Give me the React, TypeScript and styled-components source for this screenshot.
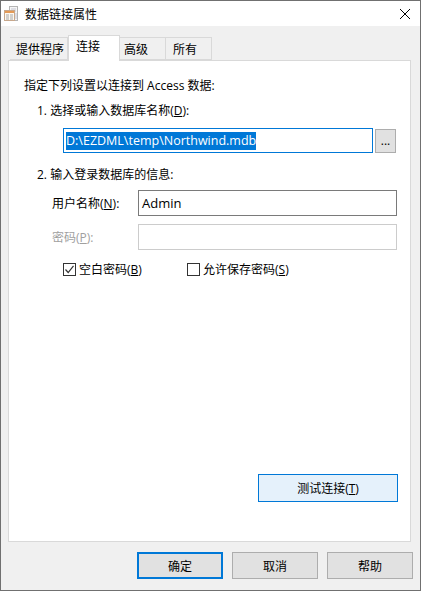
import React from 'react';
import styled, { createGlobalStyle } from 'styled-components';

const GlobalStyle = createGlobalStyle`
    html, body {
        margin: 0;
        padding: 0;
        background: #f0f0f0;
    }
    * {
        box-sizing: border-box;
    }
`;

const Dialog = styled.div`
    width: 421px;
    height: 591px;
    display: flex;
    flex-direction: column;
    border: 1px solid #707070;
    background: #f0f0f0;
    color: #000;
    font-family: "Open Sans", "Noto Sans CJK SC", sans-serif;
    font-size: 12px;
    overflow: hidden;
`;

const TitleBar = styled.div`
    height: 25px;
    flex: none;
    display: flex;
    align-items: center;
    padding-left: 3px;
    background: #fff;
`;

const TitleText = styled.span`
    margin-left: 5px;
    font-size: 12px;
`;

const CloseIcon = styled.svg`
    margin-left: auto;
    margin-right: 10px;
    width: 10px;
    height: 10px;
`;

const Body = styled.div`
    flex: 1;
    display: flex;
    flex-direction: column;
    padding: 9px 9px 0 7px;
`;

const TabRow = styled.div`
    display: flex;
    align-items: flex-end;
    height: 25px;
    padding-left: 2px;
    position: relative;
    z-index: 1;
`;

const Tab = styled.div<{ $active?: boolean; $width: number; $pad: number }>`
    width: ${p => p.$width}px;
    height: ${p => (p.$active ? 26 : 23)}px;
    margin-bottom: ${p => (p.$active ? -1 : 0)}px;
    padding: ${p => (p.$active ? 3 : 4)}px 0 0 ${p => p.$pad}px;
    line-height: 16px;
    background: ${p => (p.$active ? '#fff' : '#f0f0f0')};
    border: 1px solid #d9d9d9;
    border-bottom: ${p => (p.$active ? 'none' : '1px solid #d9d9d9')};
    border-left: ${p => (p.$active ? '1px solid #d9d9d9' : 'none')};
`;

const Panel = styled.div`
    height: 482px;
    display: flex;
    flex-direction: column;
    background: #fff;
    border: 1px solid #d9d9d9;
    padding: 17px 12px 0 15px;
`;

const Line = styled.div<{ $indent?: number; $top?: number; $muted?: boolean }>`
    margin-left: ${p => p.$indent ?? 0}px;
    margin-top: ${p => p.$top ?? 0}px;
    line-height: 16px;
    color: ${p => (p.$muted ? '#a0a0a0' : '#000')};
`;

const PathRow = styled.div`
    display: flex;
    align-items: center;
    gap: 2px;
    margin-left: 39px;
    margin-top: 9px;
`;

const PathInput = styled.div`
    width: 310px;
    height: 25px;
    display: flex;
    align-items: center;
    padding-left: 2px;
    border: 1px solid #0078d7;
    background: #fff;
`;

const Selected = styled.span`
    background: #0078d7;
    color: #fff;
    line-height: 18px;
    font-size: 12.5px;
`;

const BrowseButton = styled.div`
    width: 21px;
    height: 24px;
    display: flex;
    align-items: center;
    justify-content: center;
    background: #e1e1e1;
    border: 1px solid #adadad;
`;

const Field = styled.div`
    display: grid;
    grid-template-columns: 86px 259px;
    align-items: center;
    margin-left: 28px;
    height: 26px;
`;

const FieldLabel = styled.span`
    padding-top: 2px;
`;

const FieldBox = styled.div<{ $disabled?: boolean }>`
    height: 26px;
    display: flex;
    align-items: center;
    padding-left: 3px;
    font-size: 13px;
    background: #fff;
    border: 1px solid ${p => (p.$disabled ? '#cccccc' : '#7a7a7a')};
`;

const CheckRow = styled.div`
    display: flex;
    margin-left: 39px;
    margin-top: 11px;
    height: 16px;
`;

const CheckItem = styled.div<{ $width: number }>`
    width: ${p => p.$width}px;
    display: flex;
    align-items: center;
    gap: 3px;
`;

const CheckBox = styled.div`
    width: 13px;
    height: 13px;
    display: flex;
    border: 1px solid #333;
    background: #fff;
`;

const PushButton = styled.div<{ $width: number; $height: number; $kind?: 'hover' | 'default' }>`
    width: ${p => p.$width}px;
    height: ${p => p.$height}px;
    display: flex;
    align-items: center;
    justify-content: center;
    background: ${p => (p.$kind === 'hover' ? '#e5f1fb' : '#e1e1e1')};
    border: ${p =>
        p.$kind === 'default' ? '2px solid #0078d7'
        : p.$kind === 'hover' ? '1px solid #0078d7'
        : '1px solid #adadad'};
`;

const TestRow = styled.div`
    margin-top: auto;
    margin-bottom: 39px;
    display: flex;
    justify-content: flex-end;
`;

const Footer = styled.div`
    display: flex;
    justify-content: flex-end;
    gap: 9px;
    margin-top: 10px;
    margin-right: -2px;
`;

const AppIcon = () => (
    <svg width="16" height="16" viewBox="0 0 16 16">
        <rect x="5.5" y="0.5" width="8" height="14" fill="#f6f6f6" stroke="#b4b4b4" />
        <path d="M7 3h5M7 5h5M11 8h2M11 10h2M11 12h2" stroke="#c4c4d0" />
        <rect x="0.5" y="4.5" width="10" height="10" fill="#fdf8f0" stroke="#c8a88c" />
        <rect x="1" y="5" width="9" height="2" fill="#e59a55" />
        <path d="M2 9h3M6 9h3M2 11h3M6 11h3M2 13h3M6 13h3" stroke="#a8a8a8" />
    </svg>
);

const Check = () => (
    <svg width="11" height="11" viewBox="0 0 11 11">
        <path d="M1.5 5.5 4.2 8.5 9.5 1.8" fill="none" stroke="#333" strokeWidth="1.2" />
    </svg>
);

const App = () => {
    return (
        <Dialog>
            <GlobalStyle />
            <TitleBar>
                <AppIcon />
                <TitleText>数据链接属性</TitleText>
                <CloseIcon viewBox="0 0 10 10">
                    <path d="M0 0 10 10M10 0 0 10" stroke="#000" strokeWidth="1" />
                </CloseIcon>
            </TitleBar>
            <Body>
                <TabRow>
                    <Tab $width={58} $pad={6}>提供程序</Tab>
                    <Tab $active $width={52} $pad={7}>连接</Tab>
                    <Tab $width={46} $pad={4}>高级</Tab>
                    <Tab $width={46} $pad={7}>所有</Tab>
                </TabRow>
                <Panel>
                    <Line>指定下列设置以连接到 Access 数据:</Line>
                    <Line $indent={13} $top={9}>1. 选择或输入数据库名称(<u>D</u>):</Line>
                    <PathRow>
                        <PathInput>
                            <Selected>D:\EZDML\temp\Northwind.mdb</Selected>
                        </PathInput>
                        <BrowseButton>...</BrowseButton>
                    </PathRow>
                    <Line $indent={13} $top={14}>2. 输入登录数据库的信息:</Line>
                    <Line as="div" $top={7}>
                        <Field>
                            <FieldLabel>用户名称(<u>N</u>):</FieldLabel>
                            <FieldBox>Admin</FieldBox>
                        </Field>
                    </Line>
                    <Line as="div" $top={8} $muted>
                        <Field>
                            <FieldLabel>密码(<u>P</u>):</FieldLabel>
                            <FieldBox $disabled />
                        </Field>
                    </Line>
                    <CheckRow>
                        <CheckItem $width={124}>
                            <CheckBox><Check /></CheckBox>
                            <span>空白密码(<u>B</u>)</span>
                        </CheckItem>
                        <CheckItem $width={130}>
                            <CheckBox />
                            <span>允许保存密码(<u>S</u>)</span>
                        </CheckItem>
                    </CheckRow>
                    <TestRow>
                        <PushButton $width={140} $height={28} $kind="hover">测试连接(<u>T</u>)</PushButton>
                    </TestRow>
                </Panel>
                <Footer>
                    <PushButton $width={86} $height={27} $kind="default">确定</PushButton>
                    <PushButton $width={86} $height={27}>取消</PushButton>
                    <PushButton $width={86} $height={27}>帮助</PushButton>
                </Footer>
            </Body>
        </Dialog>
    );
};

export default App;
